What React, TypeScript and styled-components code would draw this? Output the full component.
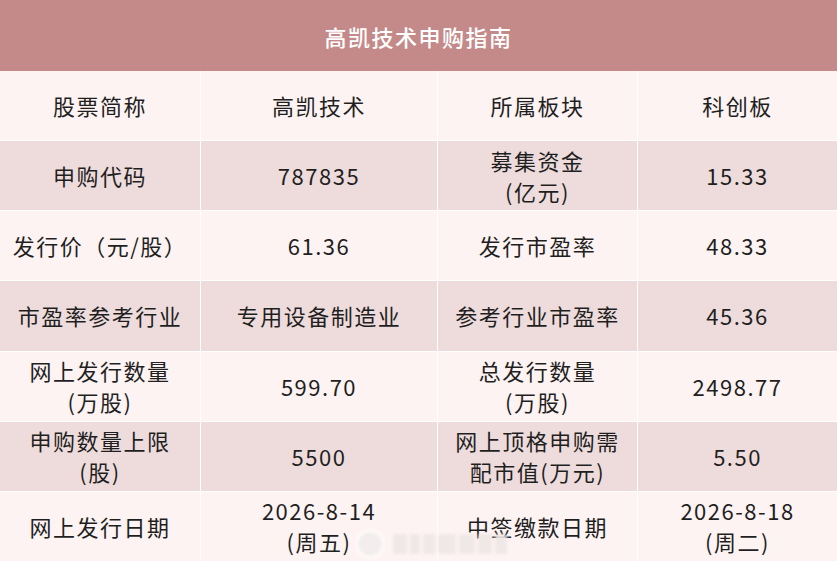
import React from "react";
import styled, {createGlobalStyle} from "styled-components";

const GlobalStyle = createGlobalStyle`
  html, body {
    margin: 0;
    padding: 0;
    background: #ffffff;
  }
  body {
    font-family: "Noto Sans CJK SC", "Microsoft YaHei", sans-serif;
  }
`;

type Cell = string[];
type Row = [Cell, Cell, Cell, Cell];

const rows: Row[] = [
  [["股票简称"], ["高凯技术"], ["所属板块"], ["科创板"]],
  [["申购代码"], ["787835"], ["募集资金", "(亿元)"], ["15.33"]],
  [["发行价（元/股）"], ["61.36"], ["发行市盈率"], ["48.33"]],
  [["市盈率参考行业"], ["专用设备制造业"], ["参考行业市盈率"], ["45.36"]],
  [["网上发行数量", "(万股)"], ["599.70"], ["总发行数量", "(万股)"], ["2498.77"]],
  [["申购数量上限", "(股)"], ["5500"], ["网上顶格申购需", "配市值(万元)"], ["5.50"]],
  [["网上发行日期"], ["2026-8-14", "(周五)"], ["中签缴款日期"], ["2026-8-18", "(周二)"]],
];

// blurred bars standing in for the unreadable watermark glyphs
const wmBars = [14, 10, 12, 18, 16, 14, 12];

export default function App() {
  return <Page>
    <GlobalStyle/>
    <Table>
      <Title>高凯技术申购指南</Title>
      {rows.map((row, r) => row.map((cell, c) => (
        <Td key={`${r}-${c}`} $dark={r % 2 === 1}>
          <CellText>
            {cell.map((line, i) => <Line key={i}>{line}</Line>)}
          </CellText>
        </Td>
      )))}
    </Table>
    <Watermark aria-hidden>
      <WmLogo/>
      {wmBars.map((w, i) => <WmBar key={i} style={{width: w}}/>)}
    </Watermark>
  </Page>
}

const Page = styled('div')`
  position: relative;
  width: 837px;
  height: 561px;
  overflow: hidden;
`;

const Table = styled('div')`
  display: grid;
  grid-template-columns: 200px 236px 199px 199px;
  grid-template-rows: 70px repeat(7, 1fr);
  column-gap: 1px;
  row-gap: 1px;
  width: 837px;
  height: 561px;
  background: #ffffff;
`;

const Title = styled('div')`
  grid-column: 1 / span 4;
  display: flex;
  align-items: center;
  justify-content: center;
  background: #c48a8a;
  color: #ffffff;
  font-size: 22px;
  font-weight: 500;
  letter-spacing: 1.5px;
  margin-bottom: -1px;
`;

const Td = styled('div')<{ $dark: boolean }>`
  display: flex;
  align-items: center;
  justify-content: center;
  background: ${p => p.$dark ? '#eedcdc' : '#fdf3f2'};
`;

const CellText = styled('div')`
  display: flex;
  flex-direction: column;
  align-items: center;
  color: #1f1f1f;
  font-size: 22px;
  line-height: 31px;
  letter-spacing: 1.5px;
  text-align: center;
`;

const Line = styled('span')`
  white-space: nowrap;
`;

const Watermark = styled('div')`
  position: absolute;
  left: 356px;
  top: 530px;
  display: flex;
  align-items: center;
  gap: 3px;
  filter: blur(1.5px);
  opacity: 0.9;
`;

const WmLogo = styled('div')`
  width: 24px;
  height: 24px;
  margin-right: 6px;
  border-radius: 50%;
  background: #f3eded;
  border: 2px solid #ffffff;
`;

const WmBar = styled('div')`
  height: 20px;
  border-radius: 2px;
  background: #efe6e6;
`;
